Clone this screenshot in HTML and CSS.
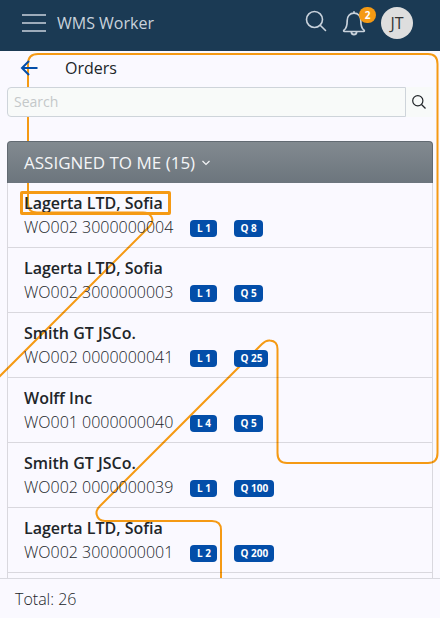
FILE: index.html
```html
<!DOCTYPE html>
<html lang="en">
<head>
<meta charset="utf-8">
<meta name="viewport" content="width=device-width, initial-scale=1">
<title>WMS Worker</title>
<link rel="stylesheet" href="styles.css">
</head>
<body>
<header class="topbar">
  <button class="icon-button" type="button" aria-label="Menu">
    <svg width="24" height="20" viewBox="0 0 24 20" fill="none" stroke="currentColor" stroke-width="2"><path d="M0 2h24M0 10h24M0 18h24" opacity=".75"/></svg>
  </button>
  <span class="brand">WMS Worker</span>
  <button class="icon-button find" type="button" aria-label="Search the app">
    <svg width="22" height="22" viewBox="0 0 22 22" fill="none" stroke="currentColor" stroke-width="1.6" stroke-linecap="round"><circle cx="9.5" cy="9.5" r="8"/><path d="M15.2 15.2l5.3 5.3"/></svg>
  </button>
  <button class="icon-button bell" type="button" aria-label="Notifications">
    <svg width="24" height="26" viewBox="0 0 24 26" fill="none" stroke="currentColor" stroke-width="1.7" stroke-linejoin="round" stroke-linecap="round"><path d="M12 3.2c-4.200 0-6.800 3-6.800 7.200 0 5.600-1.300 8.400-3.200 9.700-.6.500-.4 1.400.4 1.400h19.200c.8 0 1-.9.4-1.400-1.900-1.300-3.200-4.100-3.200-9.700 0-4.200-2.600-7.200-6.800-7.200zM12 3V1.800"/><path d="M9.500 22.500c.3 2.700 4.700 2.700 5 0" stroke-width="2"/></svg>
    <span class="count">2</span>
  </button>
  <button class="avatar" type="button">JT</button>
</header>

<main class="content">
  <svg class="route" width="440" height="527" viewBox="0 51 440 527" fill="none" stroke="#f59a14" stroke-width="2" aria-hidden="true">
    <path d="M-2 378L149.500 226.500Q154 222 151.500 217Q149 212.500 143 212.500H37Q28 212.500 28 203.500V64Q28 54 38 54H428Q437.500 54 437.500 64V453Q437.500 463 428 463H287Q277.500 463 277.500 453V349Q277.500 341 270 340.500Q266 340 262 344L100 506Q96 510 96.500 514Q98 521 105 521H212Q221 521 221 530V580"/>
  </svg>
  <div class="page-title">
    <a class="back" href="#" aria-label="Back">
      <svg width="18" height="16" viewBox="0 0 18 16" fill="none" stroke="currentColor" stroke-width="2"><path d="M17.500 8H2M9 1L2 8l7 7"/></svg>
    </a>
    <h1>Orders</h1>
  </div>
  <form class="search">
    <input type="search" placeholder="Search" aria-label="Search orders">
    <button type="submit" aria-label="Search">
      <svg width="14" height="14" viewBox="0 0 14 14" fill="none" stroke="currentColor" stroke-width="1.200"><circle cx="5.800" cy="5.800" r="5.100"/><path d="M9.500 9.500l4 4"/></svg>
    </button>
  </form>
  <section class="orders">
    <h2><button class="group" type="button" aria-expanded="true">ASSIGNED TO ME (15)
      <svg width="8" height="6" viewBox="0 0 8 6" fill="none" stroke="currentColor" stroke-width="1.200"><path d="M.5 1L4 4.500 7.500 1"/></svg>
    </button></h2>
    <ul>
      <li><a href="#"><strong class="marked">Lagerta LTD, Sofia</strong><span class="detail"><span class="number">WO002 3000000004</span><span class="tag">L 1</span><span class="tag">Q 8</span></span></a></li>
      <li><a href="#"><strong>Lagerta LTD, Sofia</strong><span class="detail"><span class="number">WO002 3000000003</span><span class="tag">L 1</span><span class="tag">Q 5</span></span></a></li>
      <li><a href="#"><strong>Smith GT JSCo.</strong><span class="detail"><span class="number">WO002 0000000041</span><span class="tag">L 1</span><span class="tag">Q 25</span></span></a></li>
      <li><a href="#"><strong>Wolff Inc</strong><span class="detail"><span class="number">WO001 0000000040</span><span class="tag">L 4</span><span class="tag">Q 5</span></span></a></li>
      <li><a href="#"><strong>Smith GT JSCo.</strong><span class="detail"><span class="number">WO002 0000000039</span><span class="tag">L 1</span><span class="tag">Q 100</span></span></a></li>
      <li><a href="#"><strong>Lagerta LTD, Sofia</strong><span class="detail"><span class="number">WO002 3000000001</span><span class="tag">L 2</span><span class="tag">Q 200</span></span></a></li>
      <li class="next"></li>
    </ul>
  </section>
</main>

<footer class="total">Total: 26</footer>
</body>
</html>
```
FILE: styles.css
```css
* {
  box-sizing: border-box;
}

body {
  display: flex;
  flex-direction: column;
  height: 100vh;
  margin: 0;
  background: #faf9ff;
  color: #212529;
  font: 16px/24px "Open Sans", sans-serif;
}

button {
  padding: 0;
  border: 0;
  background: none;
  color: inherit;
  font: inherit;
}

a {
  color: inherit;
  text-decoration: none;
}

svg {
  display: block;
}

h1,
h2,
ul {
  margin: 0;
  padding: 0;
}

.topbar {
  display: flex;
  flex: none;
  align-items: center;
  height: 51px;
  padding: 0 27px 5px 22px;
  background: #1b3a54;
  color: #c9d2dc;
}

.brand {
  flex: 1;
  margin-left: 11px;
  font-weight: 500;
}

.find {
  padding-bottom: 4px;
}

.bell {
  position: relative;
  margin: 0 15px;
}

.count {
  position: absolute;
  top: -3px;
  right: -10px;
  width: 17px;
  border-radius: 8px;
  background: #f59a14;
  color: #fff;
  font-size: 10px;
  font-weight: 700;
  line-height: 16px;
}

.avatar {
  width: 32px;
  height: 32px;
  border-radius: 50%;
  background: #dedede;
  color: #333;
}

.content {
  position: relative;
  z-index: 0;
  flex: 1;
  min-height: 0;
  padding: 0 7px;
  overflow: hidden;
}

.route {
  position: absolute;
  z-index: -1;
  top: 0;
  left: 0;
}

.page-title {
  display: flex;
  align-items: center;
  gap: 27px;
  height: 36px;
  padding: 0 13px 3px;
}

.back {
  color: #034ea9;
}

h1 {
  font-size: 16px;
  font-weight: 500;
}

.search {
  display: flex;
  height: 30px;
  margin-bottom: 24px;
}

.search input {
  flex: 1;
  min-width: 0;
  padding: 0 6px;
  border: 1px solid #ced4da;
  border-radius: 4px 0 0 4px;
  background: #f8faf9;
  font: inherit;
  font-size: 14px;
}

.search input::placeholder {
  color: #c4c8c9;
}

.search button {
  width: 27px;
  padding-left: 6px;
  background: #f8faf9;
}

.group {
  display: flex;
  align-items: center;
  gap: 7px;
  width: 100%;
  height: 42px;
  padding: 0 16px;
  border: 1px solid #626a72;
  border-bottom: 0;
  border-radius: 4px 4px 0 0;
  background: linear-gradient(#828a90, #6c757d);
  color: #f4f5f7;
  font-size: 17px;
  font-weight: 500;
}

.orders ul {
  border: 1px solid rgba(0, 0, 0, 0.13);
  border-width: 0 1px;
  list-style: none;
}

.orders li {
  height: 65px;
  padding: 8px 16px;
  border-bottom: 1px solid rgba(0, 0, 0, 0.13);
}

.orders strong {
  display: block;
  width: fit-content;
  font-weight: 600;
}

.orders .marked {
  margin-left: -4px;
  padding: 0 8px 0 4px;
  border-radius: 2px;
  outline: 3px solid #f59a14;
  outline-offset: -3px;
}

.detail {
  display: flex;
  align-items: center;
  gap: 17px;
}

.number {
  font-weight: 300;
}

.tag {
  min-width: 27px;
  margin-top: 2px;
  padding: 0 6px;
  border-radius: 4px;
  background: #034ea9;
  color: #fff;
  font-size: 10px;
  font-weight: 700;
  line-height: 17px;
  text-align: center;
}

.total {
  flex: none;
  height: 40px;
  padding: 8px 15px;
  border-top: 1px solid #d9d9df;
  background: #faf9ff;
  font-weight: 300;
}
```
